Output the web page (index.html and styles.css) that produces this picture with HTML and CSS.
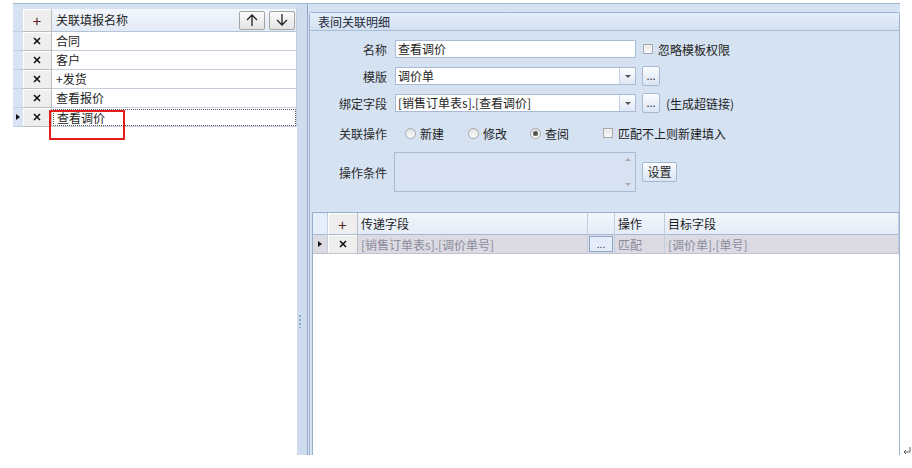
FILE: index.html
```html
<!DOCTYPE html>
<html lang="zh-CN">
<head>
    <meta charset="UTF-8">
    <title>表间关联</title>
    <link rel="stylesheet" href="styles.css">
</head>
<body>
<div class="page">
    <div class="window">
        <!-- left: list of linked reports -->
        <div class="left-pane">
            <div class="strip"></div>
            <div class="lrow lhead">
                <div class="ind"></div>
                <div class="btn-cell"><span class="plus">+</span></div>
                <div class="name-cell head-cell">
                    <span>关联填报名称</span>
                    <span class="arrows">
                        <span class="arrow-btn"><svg width="12" height="14" viewBox="0 0 12 14"><path d="M6 13V2M1 7l5-5 5 5" fill="none" stroke="#222" stroke-width="1.3"/></svg></span>
                        <span class="arrow-btn"><svg width="12" height="14" viewBox="0 0 12 14"><path d="M6 1v11M1 7l5 5 5-5" fill="none" stroke="#222" stroke-width="1.3"/></svg></span>
                    </span>
                </div>
            </div>
            <div class="lrow">
                <div class="ind"></div>
                <div class="btn-cell"><svg class="x" width="8" height="8" viewBox="0 0 8 8"><path d="M1 1l6 6M7 1L1 7" stroke="#111" stroke-width="1.6"/></svg></div>
                <div class="name-cell">合同</div>
            </div>
            <div class="lrow">
                <div class="ind"></div>
                <div class="btn-cell"><svg class="x" width="8" height="8" viewBox="0 0 8 8"><path d="M1 1l6 6M7 1L1 7" stroke="#111" stroke-width="1.6"/></svg></div>
                <div class="name-cell">客户</div>
            </div>
            <div class="lrow">
                <div class="ind"></div>
                <div class="btn-cell"><svg class="x" width="8" height="8" viewBox="0 0 8 8"><path d="M1 1l6 6M7 1L1 7" stroke="#111" stroke-width="1.6"/></svg></div>
                <div class="name-cell">+发货</div>
            </div>
            <div class="lrow">
                <div class="ind"></div>
                <div class="btn-cell"><svg class="x" width="8" height="8" viewBox="0 0 8 8"><path d="M1 1l6 6M7 1L1 7" stroke="#111" stroke-width="1.6"/></svg></div>
                <div class="name-cell">查看报价</div>
            </div>
            <div class="lrow">
                <div class="ind"><span class="pointer"></span></div>
                <div class="btn-cell"><svg class="x" width="8" height="8" viewBox="0 0 8 8"><path d="M1 1l6 6M7 1L1 7" stroke="#111" stroke-width="1.6"/></svg></div>
                <div class="name-cell focused"><span>查看调价</span></div>
            </div>
            <div class="red-mark"></div>
        </div>

        <div class="splitter"><span class="grip"></span></div>

        <!-- right: detail -->
        <div class="right-pane">
            <div class="group">
                <div class="group-title">表间关联明细</div>
                <div class="group-body">
                    <div class="frow first">
                        <label class="flabel">名称</label>
                        <div class="input">查看调价</div>
                        <span class="check"></span>
                        <span class="check-text">忽略模板权限</span>
                    </div>
                    <div class="frow">
                        <label class="flabel">模版</label>
                        <div class="input combo"><span class="combo-text">调价单</span><span class="drop"><span class="tri"></span></span></div>
                        <span class="dots-btn">...</span>
                    </div>
                    <div class="frow">
                        <label class="flabel">绑定字段</label>
                        <div class="input combo"><span class="combo-text">[销售订单表s].[查看调价]</span><span class="drop"><span class="tri"></span></span></div>
                        <span class="dots-btn">...</span>
                        <span class="hint">(生成超链接)</span>
                    </div>
                    <div class="frow radios">
                        <label class="flabel">关联操作</label>
                        <span class="opt w63"><span class="radio"></span>新建</span>
                        <span class="opt w62"><span class="radio"></span>修改</span>
                        <span class="opt w73"><span class="radio on"></span>查阅</span>
                        <span class="opt"><span class="check"></span>匹配不上则新建填入</span>
                    </div>
                    <div class="frow memo-row">
                        <label class="flabel">操作条件</label>
                        <div class="memo">
                            <span class="scroll"><span class="tri up"></span><span class="tri"></span></span>
                        </div>
                        <span class="set-btn">设置</span>
                    </div>

                    <div class="grid">
                        <div class="grow ghead">
                            <div class="gcell gind"></div>
                            <div class="gcell gbtn"><span class="plus">+</span></div>
                            <div class="gcell">传递字段</div>
                            <div class="gcell"></div>
                            <div class="gcell">操作</div>
                            <div class="gcell">目标字段</div>
                        </div>
                        <div class="grow gdata">
                            <div class="gcell gind"><span class="pointer"></span></div>
                            <div class="gcell gbtn"><svg width="8" height="8" viewBox="0 0 8 8"><path d="M1 1l6 6M7 1L1 7" stroke="#111" stroke-width="1.6"/></svg></div>
                            <div class="gcell">[销售订单表s].[调价单号]</div>
                            <div class="gcell cell-btn"><span class="mini-btn">...</span></div>
                            <div class="gcell">匹配</div>
                            <div class="gcell">[调价单].[单号]</div>
                        </div>
                    </div>
                </div>
            </div>
        </div>
    </div>
    <svg class="para" width="8" height="8" viewBox="0 0 8 8"><path d="M7 0v5H1M3 3L1 5l2 2" fill="none" stroke="#666" stroke-width="1"/></svg>
</div>
</body>
</html>
```

FILE: styles.css
```css
* {
    box-sizing: border-box;
}

body {
    margin: 0;
    background: #fff;
    font-family: "Noto Sans CJK SC", "Noto Sans", sans-serif;
    font-size: 12px;
    color: #1d1d1d;
}

.page {
    display: flex;
    align-items: flex-end;
    padding: 3px 0 0 13px;
}

.window {
    width: 887px;
    height: 452px;
    display: flex;
    border-top: 1px solid #a3b7d2;
    background: #d5e2f2;
}

/* left list */
.left-pane {
    position: relative;
    width: 284px;
    background: #fff;
}

.strip {
    height: 5px;
    background: #d5e2f2;
}

.lrow {
    display: grid;
    grid-template-columns: 10px 29px 1fr;
    height: 19px;
}

.lrow.lhead {
    height: 23px;
}

.ind {
    background: #d8e4f3;
    border-bottom: 1px solid #c2d0e3;
    display: flex;
    align-items: center;
    justify-content: center;
}

.lhead .ind {
    background: #d5e2f2;
}

.pointer {
    width: 0;
    height: 0;
    border-top: 3px solid transparent;
    border-bottom: 3px solid transparent;
    border-left: 4px solid #111;
}

.btn-cell {
    display: flex;
    align-items: center;
    justify-content: center;
    background: #eeeeee;
    border-right: 1px solid #bdbdbd;
    border-bottom: 1px solid #bdbdbd;
    box-shadow: inset 1px 1px 0 #fff;
}

.plus {
    font-size: 15px;
    line-height: 1;
    color: #5c1d2a;
    margin-top: 1px;
}

.name-cell {
    border-right: 1px solid #c5cfdd;
    border-bottom: 1px solid #c5cfdd;
    padding-left: 4px;
    line-height: 18px;
    white-space: nowrap;
}

.head-cell {
    display: flex;
    align-items: center;
    justify-content: space-between;
    background: linear-gradient(#f3f7fc, #e2eaf6);
    border-bottom-color: #b4c3d7;
    padding-right: 1px;
}

.arrows {
    display: flex;
    gap: 4px;
}

.arrow-btn {
    width: 26px;
    height: 19px;
    display: flex;
    align-items: center;
    justify-content: center;
    border: 1px solid #a4a4a4;
    border-radius: 2px;
    background: linear-gradient(#fbfbfb, #e3e3e3);
}

.focused {
    padding: 1px 0 0 1px;
}

.focused span {
    display: block;
    height: 17px;
    line-height: 16px;
    padding-left: 3px;
    border: 1px dotted #555;
}

.red-mark {
    position: absolute;
    left: 36px;
    top: 106px;
    width: 76px;
    height: 30px;
    border: 2px solid #e21b1b;
}

/* splitter */
.splitter {
    width: 10px;
    background: #cfdcee;
    padding: 311px 0 0 2px;
}

.grip {
    display: block;
    width: 2px;
    height: 13px;
    background: repeating-linear-gradient(#8ea4c4 0 2px, transparent 2px 4px);
}

/* right detail */
.right-pane {
    flex: 1;
    border-left: 1px solid #93a9c7;
    padding: 8px 0 0 1px;
}

.group {
    height: 100%;
    display: flex;
    flex-direction: column;
    border: 1px solid #9db2ce;
    border-bottom: none;
    border-radius: 3px 3px 0 0;
}

.group-title {
    height: 18px;
    line-height: 17px;
    padding-left: 8px;
    background: linear-gradient(#e5eefa, #d3e0f1);
    border-bottom: 1px solid #a9bcd6;
    color: #1f2a3a;
}

.group-body {
    flex: 1;
    display: flex;
    flex-direction: column;
    padding-left: 2px;
    background: #d5e2f2;
}

.frow {
    display: flex;
    align-items: center;
    height: 18px;
    margin-top: 9px;
}

.frow.radios {
    margin-top: 12px;
}

.frow.memo-row {
    height: 40px;
    margin-top: 10px;
}

.flabel {
    width: 75px;
    margin-right: 8px;
    text-align: right;
    color: #2a2a2a;
}

.input {
    width: 241px;
    height: 18px;
    border: 1px solid #a9bbd4;
    background: #fff;
    line-height: 16px;
    padding-left: 2px;
    white-space: nowrap;
}

.combo {
    display: flex;
    padding-left: 0;
}

.combo-text {
    flex: 1;
    padding-left: 2px;
}

.drop {
    width: 16px;
    display: flex;
    align-items: center;
    justify-content: center;
    border-left: 1px solid #c3d1e4;
    background: linear-gradient(#fdfeff, #dfe8f5);
}

.tri {
    width: 0;
    height: 0;
    border-left: 3px solid transparent;
    border-right: 3px solid transparent;
    border-top: 3px solid #555;
}

.tri.up {
    border-top: none;
    border-bottom: 3px solid #aaa;
}

.dots-btn {
    width: 18px;
    height: 20px;
    margin-left: 6px;
    text-align: center;
    line-height: 16px;
    font-size: 11px;
    border: 1px solid #a7b9d2;
    border-radius: 2px;
    background: linear-gradient(#fbfdff, #dae5f3);
    color: #333;
}

.hint {
    margin-left: 6px;
}

.check {
    width: 10px;
    height: 10px;
    margin: 0 5px 0 7px;
    border: 1px solid #a8a8a8;
    background: linear-gradient(#e4e4e4, #fafafa);
    box-shadow: inset 0 0 0 1px #f4f4f4;
}

.opt {
    display: flex;
    align-items: center;
    flex-shrink: 0;
}

.opt .check {
    margin-left: 0;
    margin-right: 5px;
}

.radios .flabel {
    margin-right: 18px;
}

.w63 {
    width: 63px;
}

.w62 {
    width: 62px;
}

.w73 {
    width: 73px;
}

.radio {
    position: relative;
    width: 11px;
    height: 11px;
    margin-right: 4px;
    border-radius: 50%;
    border: 1px solid #a7a7a7;
    background: linear-gradient(#e2e2e2, #fdfdfd);
}

.radio.on::after {
    content: "";
    position: absolute;
    left: 2px;
    top: 2px;
    width: 5px;
    height: 5px;
    border-radius: 50%;
    background: #4a4a4a;
    box-shadow: inset 0 0 0 1px #777;
}

.memo {
    width: 242px;
    height: 40px;
    margin-left: -1px;
    display: flex;
    justify-content: flex-end;
    border: 1px solid #a9bbd4;
    background: #d7e3f2;
}

.scroll {
    width: 15px;
    display: flex;
    flex-direction: column;
    align-items: center;
    justify-content: space-between;
    padding: 5px 0 5px;
}

.scroll .tri {
    border-top-color: #aaa;
}

.set-btn {
    width: 35px;
    height: 20px;
    margin-left: 6px;
    text-align: center;
    line-height: 18px;
    border: 1px solid #a7b9d2;
    border-radius: 2px;
    background: linear-gradient(#fbfdff, #dae5f3);
}

/* bottom grid */
.grid {
    flex: 1;
    margin-top: 20px;
    background: #fff;
    border-top: 1px solid #9aaec9;
    border-left: 1px solid #9aaec9;
}

.grow {
    display: grid;
    grid-template-columns: 15px 30px 230px 27px 50px 1fr;
    height: 19px;
}

.grow.ghead {
    height: 22px;
    background: linear-gradient(#f2f6fc, #e3ebf7);
}

.gcell {
    border-right: 1px solid #c2cfe0;
    border-bottom: 1px solid #a9b9d1;
    padding-left: 3px;
    display: flex;
    align-items: center;
    white-space: nowrap;
    overflow: hidden;
}

.ghead .gind {
    background: #e6eef9;
}

.gind {
    padding-left: 0;
    justify-content: center;
}

.gbtn {
    padding-left: 0;
    justify-content: center;
    background: #eeeeee;
    border-right-color: #bdbdbd;
    box-shadow: inset 1px 1px 0 #fff;
}

.gdata {
    background: #dcdbe3;
    color: #8b8b9c;
}

.gdata .gcell {
    border-bottom-color: #c3c3cf;
}

.cell-btn {
    padding: 1px;
}

.mini-btn {
    width: 100%;
    height: 100%;
    text-align: center;
    font-size: 10px;
    line-height: 13px;
    color: #333;
    border: 1px solid #8fa7c7;
    background: #e4edf9;
}

.para {
    margin: 0 0 0 3px;
}
```
